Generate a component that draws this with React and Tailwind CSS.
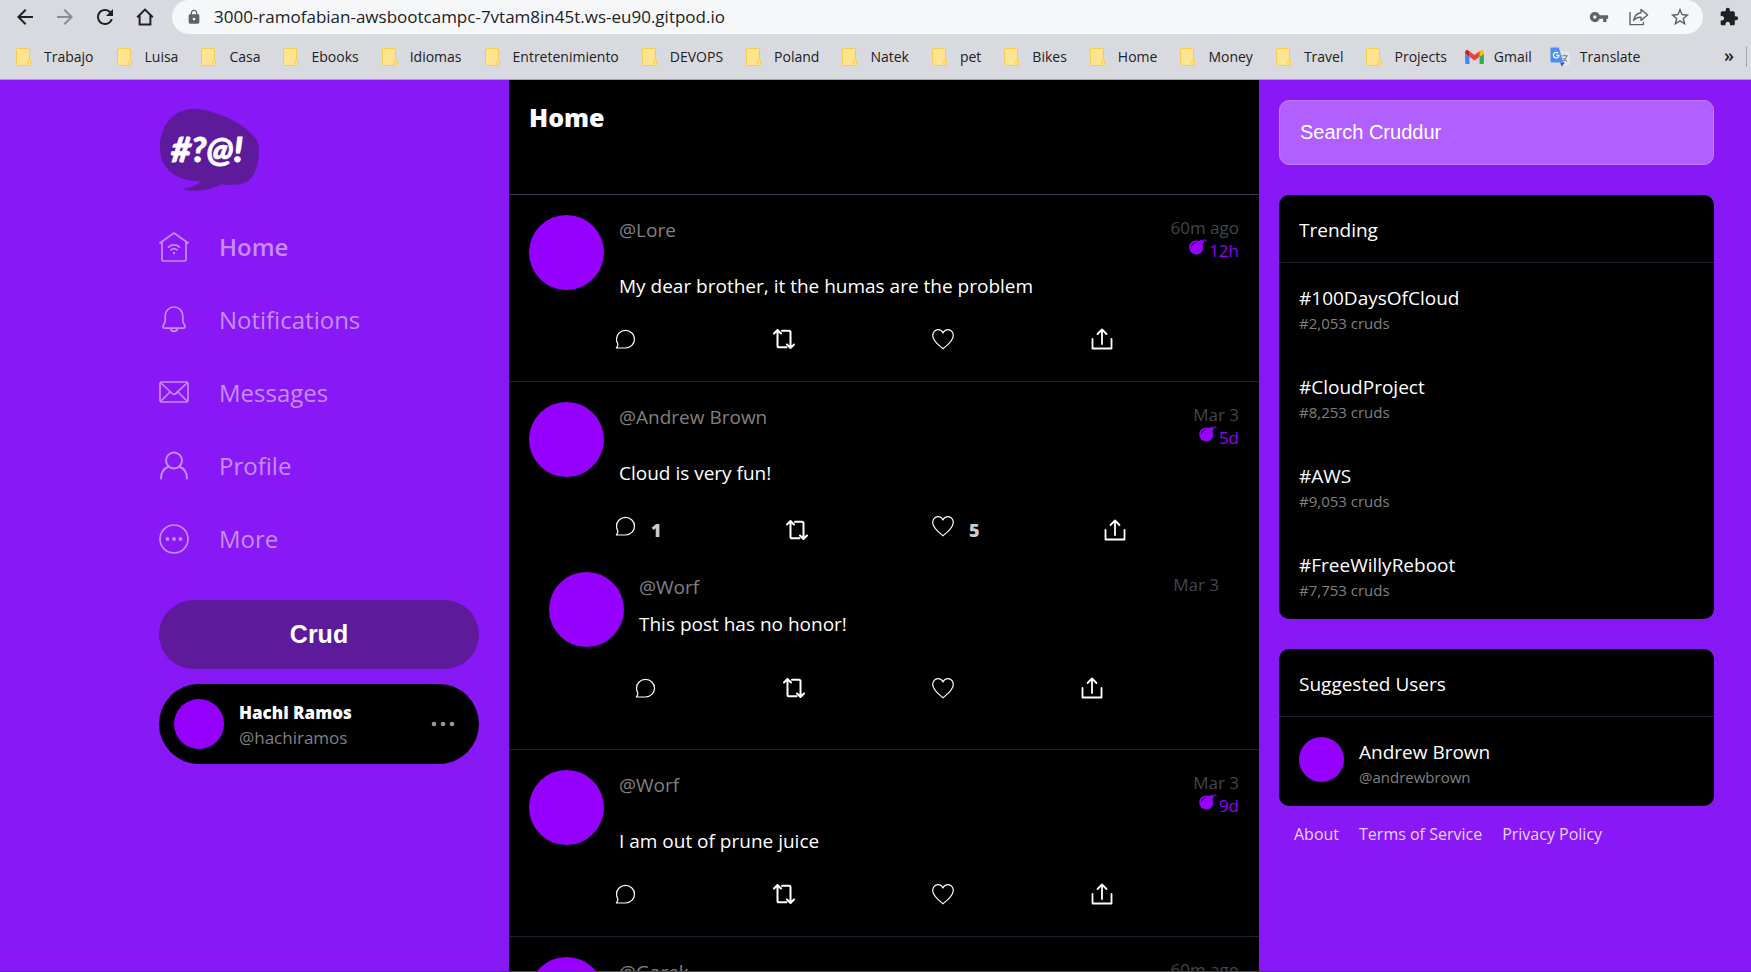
import React from "react";
import {
  MdArrowBack,
  MdArrowForward,
  MdRefresh,
  MdLock,
  MdVpnKey,
  MdStarBorder,
  MdExtension,
} from "react-icons/md";

const folders = [
  "Trabajo", "Luisa", "Casa", "Ebooks", "Idiomas", "Entretenimiento", "DEVOPS", "Poland",
  "Natek", "pet", "Bikes", "Home", "Money", "Travel", "Projects",
];

const posts = [
  { handle: "Lore", time: "60m ago", expires: "12h", message: "My dear brother, it the humas are the problem" },
  {
    handle: "Andrew Brown",
    time: "Mar 3",
    expires: "5d",
    message: "Cloud is very fun!",
    replies: 1,
    likes: 5,
    thread: [{ handle: "Worf", time: "Mar 3", message: "This post has no honor!" }],
  },
  { handle: "Worf", time: "Mar 3", expires: "9d", message: "I am out of prune juice" },
  { handle: "Garek", time: "60m ago" },
];

const trends = [
  ["#100DaysOfCloud", "#2,053 cruds"],
  ["#CloudProject", "#8,253 cruds"],
  ["#AWS", "#9,053 cruds"],
  ["#FreeWillyReboot", "#7,753 cruds"],
];

/* ---------- Browser icons ---------- */

function BrowserHomeIcon() {
  return (
    <svg viewBox="0 0 18 18" className="size-[18px]" fill="none" stroke="currentColor" strokeWidth="2">
      <path d="M1.2 9.2 9 1.6l7.8 7.6M3.6 7.4v9h10.8v-9" />
    </svg>
  );
}

function ShareIcon() {
  return (
    <svg viewBox="0 0 20 20" className="size-5" fill="none" stroke="currentColor" strokeWidth="1.4">
      <path d="M1 5v12.6h13.4v-2.8" />
      <path strokeLinejoin="round" d="M12 2.4 18.6 8 12 13.4v-3.2c-3.300-.2-5.600.800-7.300 3.200.6-4.400 3-7 7.300-7.600z" />
    </svg>
  );
}

function FolderIcon() {
  return (
    <svg viewBox="0 0 15 18" className="h-[18px] w-[15px] shrink-0">
      <path d="M1.300.5h11.400a.8.8 0 0 1 .8.8v15.400a.8.8 0 0 1-.8.800H1.300a.8.8 0 0 1-.8-.8V1.300a.8.8 0 0 1 .8-.8z" fill="#ffe48f" stroke="#f2cf54" />
      <path d="M12 17.500v-5.500h2.500v4.700a.8.8 0 0 1-.8.800z" fill="#ffe48f" stroke="#f2cf54" />
    </svg>
  );
}

function GmailIcon() {
  return (
    <svg viewBox="52 42 88 66" className="h-[14px] w-[19px] shrink-0">
      <path fill="#4285f4" d="M58 108h14V74L52 59v43c0 3.320 2.690 6 6 6" />
      <path fill="#34a853" d="M120 108h14c3.320 0 6-2.690 6-6V59l-20 15" />
      <path fill="#fbbc04" d="M120 48v26l20-15v-8c0-7.420-8.470-11.650-14.400-7.200" />
      <path fill="#ea4335" d="M72 74V48l24 18 24-18v26L96 92" />
      <path fill="#c5221f" d="M52 51v8l20 15V48l-5.600-4.200c-5.940-4.450-14.400-.22-14.400 7.200" />
    </svg>
  );
}

function TranslateIcon() {
  return (
    <svg viewBox="0 0 20 20" className="size-5 shrink-0">
      <path fill="#e4e6ea" d="M7 4.600h11.600c.6 0 1 .4 1 1v11.800c0 .6-.4 1-1 1H12z" />
      <path fill="none" stroke="#80868b" strokeWidth="1.100" d="M11.800 8.800h6.200M14.800 7.600v1.200M16.800 8.800c-.5 2.400-2 4.400-4 5.500M13.400 11c.8 1.500 2 2.700 3.800 3.500" />
      <path fill="#3c4fc0" d="M10 15.500h5l-3.200 4z" />
      <path fill="#4f8df6" d="M1.500.5h7.300L13.500 15.600h-12c-.6 0-1-.4-1-1V1.500c0-.6.4-1 1-1z" />
      <path fill="none" stroke="#fff" strokeWidth="1.300" d="M8.300 6.300A2.800 2.800 0 1 0 9 8.300H6.300" />
    </svg>
  );
}

/* ---------- App icons ---------- */

function Logo() {
  return (
    <svg viewBox="0 0 100 83" className="h-[83px] w-[100px]" role="img" aria-label="Cruddur">
      <path
        fill="#5d1a9a"
        d="M35 0C14 0 1 17 1 38.500 1 60 17 72 42 72.500 37 76.500 31 79 23 80c11 3.500 27 2 39-4.500 7 .7 16 .7 22-1 10-3 16-15 16-36C99 22 63 1 35 0z"
      />
      <text
        x="48"
        y="53"
        textAnchor="middle"
        fill="#fff"
        stroke="#fff"
        strokeWidth="0.8"
        fontFamily="Lato, sans-serif"
        fontWeight="900"
        fontStyle="italic"
        fontSize="35"
      >
        #?@!
      </text>
    </svg>
  );
}

function NavIcon({ children }) {
  return (
    <svg
      viewBox="0 0 30 30"
      className="size-[30px] shrink-0"
      fill="none"
      stroke="currentColor"
      strokeWidth="1.700"
      strokeLinecap="round"
      strokeLinejoin="round"
    >
      {children}
    </svg>
  );
}

const navItems = [
  {
    label: "Home",
    active: true,
    icon: (
      <NavIcon>
        <path d="M1 11 15 1l14 10M3 9.800V27.300c0 1 .7 1.700 1.700 1.700h20.600c1 0 1.700-.7 1.700-1.700V9.800" />
        <path d="M9.500 15.200c3.200-3 7.800-3 11 0M12 17.900c1.800-1.600 4.200-1.600 6 0" />
        <circle cx="15" cy="21" r="1.200" fill="currentColor" stroke="none" />
      </NavIcon>
    ),
  },
  {
    label: "Notifications",
    icon: (
      <NavIcon>
        <path d="M15 2c-5 0-8.800 3.800-8.800 8.800V16c0 1.600-.7 2.700-1.700 3.900-.9 1.200-.8 3.300 1.200 3.300h18.600c2 0 2.100-2.100 1.200-3.300-1-1.200-1.700-2.300-1.700-3.900v-5.200C23.800 5.800 20 2 15 2z" />
        <path d="M11.500 23.700c.6 1.700 1.800 2.700 3.500 2.700s2.900-1 3.500-2.700" />
      </NavIcon>
    ),
  },
  {
    label: "Messages",
    icon: (
      <NavIcon>
        <rect x="1" y="4" width="28" height="20" rx="1.500" />
        <path d="m2 5 11.200 10.500c1 .9 2.600.9 3.600 0L28 5M2 23l9-9M28 23l-9-9" />
      </NavIcon>
    ),
  },
  {
    label: "Profile",
    icon: (
      <NavIcon>
        <circle cx="15" cy="9.500" r="8" strokeWidth="2" />
        <path strokeWidth="2" d="M2 27.500c0-5.500 2.800-10 7.800-12M28 27.500c0-5.500-2.800-10-7.800-12" />
      </NavIcon>
    ),
  },
  {
    label: "More",
    icon: (
      <NavIcon>
        <circle cx="15" cy="15" r="14" />
        <g fill="currentColor" stroke="none">
          <circle cx="8.500" cy="15" r="1.900" />
          <circle cx="15" cy="15" r="1.900" />
          <circle cx="21.500" cy="15" r="1.900" />
        </g>
      </NavIcon>
    ),
  },
];

function ActionIcon({ kind }) {
  return (
    <svg
      viewBox="0 0 22 22"
      className="size-[22px] shrink-0"
      fill="none"
      stroke="currentColor"
      strokeWidth="1.200"
      strokeLinecap="round"
      strokeLinejoin="round"
    >
      {kind === "Reply" && (
        <path d="M2.400 20H11.500a9 8.800 0 1 0-9-8.800c0 1.700.5 3.200 1.300 4.600.3 1.500-.4 3-1.400 4.200z" />
      )}
      {kind === "Repost" && (
        <g strokeWidth="2">
          <path d="M1 5.500 4.500 2 8 5.500M4.500 2.500v15.200c0 1 .6 1.600 1.600 1.600h7.400" />
          <path d="m14 16.500 3.500 3.500 3.500-3.500M17.500 19.500V4.300c0-1-.6-1.600-1.600-1.600H9" />
        </g>
      )}
      {kind === "Like" && (
        <path d="M11 20.800C6.500 17 .7 13 .7 7.500.7 4.300 3 1.700 6 1.700c2.200 0 4 1.100 5 3.300 1-2.200 2.800-3.300 5-3.300 3 0 5.300 2.600 5.300 5.800 0 5.500-5.800 9.500-10.300 13.300z" />
      )}
      {kind === "Share" && (
        <g strokeWidth="1.800">
          <path d="M1.500 11v9.500h19V11" />
          <path d="M11 16V1.500M6.500 6 11 1.500 15.500 6" />
        </g>
      )}
    </svg>
  );
}

function BombIcon() {
  return (
    <svg viewBox="0 0 18 16" className="h-4 w-[18px]" fill="currentColor">
      <path d="M7 1.500c1.200-.1 2.300.1 3.300.6l1.200-1.300 1.600.7c.8-1 2-1.300 3.200-1 .7.200 1.200.8 1.500 1.600l-.8.400c-.5-1-1.500-1.200-2.400-.5l.3 1.400-1.600 1.500c.7 1 1 2.100 1 3.400A7 7 0 0 1 7.200 15.500 7 7 0 0 1 .2 8.500c0-3.800 3-7 6.800-7z" />
      <path d="M2.500 7.500c.4-1.900 1.600-3.200 3.600-3.700" fill="none" stroke="#000" strokeWidth="1" strokeLinecap="round" />
    </svg>
  );
}

/* ---------- Browser ---------- */

function BrowserBar() {
  return (
    <header className="shrink-0 border-b border-[#a3a4a8] bg-[#d9dadf] font-['Open_Sans',sans-serif] text-[#202124]">
      <div className="flex h-[34px] items-center">
        <div className="flex w-[172px] shrink-0 items-center gap-4 pl-[13px]">
          <button aria-label="Back"><MdArrowBack className="size-6" /></button>
          <button aria-label="Forward" className="text-[#8b8c90]"><MdArrowForward className="size-6" /></button>
          <button aria-label="Reload"><MdRefresh className="size-6" /></button>
          <button aria-label="Browser home" className="px-[3px]"><BrowserHomeIcon /></button>
        </div>
        <div className="flex h-full min-w-0 flex-1 items-center rounded-full bg-[#f6f7f9] pl-3.5 pr-3 text-[#5f6368]">
          <MdLock className="size-4 shrink-0" />
          <input
            aria-label="Address"
            defaultValue="3000-ramofabian-awsbootcampc-7vtam8in45t.ws-eu90.gitpod.io"
            className="ml-3 min-w-0 flex-1 bg-transparent text-[17px] text-[#202124] outline-none"
          />
          <div className="flex items-center gap-5">
            <button aria-label="Passwords"><MdVpnKey className="size-5" /></button>
            <button aria-label="Share page"><ShareIcon /></button>
            <button aria-label="Bookmark"><MdStarBorder className="size-[22px]" /></button>
          </div>
        </div>
        <button aria-label="Extensions" className="pr-3 pl-4"><MdExtension className="size-5" /></button>
      </div>
      <nav aria-label="Bookmarks" className="flex h-[45px] items-center pl-4 pr-1 text-sm">
        <div className="flex min-w-0 flex-1 items-center gap-[18px] overflow-hidden">
          <div className="flex items-center gap-[23px]">
            {folders.map((name) => (
              <a key={name} href="#" className="flex items-center gap-[13px]"><FolderIcon />{name}</a>
            ))}
          </div>
          <a href="#" className="flex items-center gap-2.5"><GmailIcon />Gmail</a>
          <a href="#" className="flex items-center gap-2.5"><TranslateIcon />Translate</a>
        </div>
        <button aria-label="More bookmarks" className="pb-1 text-lg font-semibold">»</button>
        <span className="ml-3 h-5 w-px bg-[#a3a4a8]" />
      </nav>
    </header>
  );
}

/* ---------- Left column ---------- */

function Sidebar() {
  return (
    <aside className="flex flex-1 justify-end pr-[30px]">
      <div className="w-[320px] pt-[29px]">
        <Logo />
        <nav className="mt-[18px] flex flex-col text-[#c78cfb]">
          {navItems.map(({ label, icon, active }) => (
            <a key={label} href="#" className="flex h-[73px] items-center gap-[30px] text-2xl">
              {icon}
              <span className={active ? "font-semibold" : "font-normal"}>{label}</span>
            </a>
          ))}
        </nav>
        <button className="mt-[25px] h-[69px] w-full rounded-full bg-[#5d1a9a] font-['Liberation_Sans',Arial,sans-serif] text-[25px] font-bold text-white">
          Crud
        </button>
        <button className="mt-[15px] flex h-20 w-full items-center rounded-full bg-black px-[15px] text-left">
          <span className="size-[50px] rounded-full bg-[#9500ff]" />
          <span className="ml-[15px] flex flex-1 flex-col pt-0.5">
            <strong className="text-[17px] leading-[25px] font-extrabold text-white">Hachi Ramos</strong>
            <span className="text-[17px] leading-[25px] text-[#808080]">@hachiramos</span>
          </span>
          <svg viewBox="0 0 24 6" className="mr-[9px] h-1.5 w-6" fill="#999">
            <circle cx="3" cy="3" r="2.300" />
            <circle cx="12" cy="3" r="2.300" />
            <circle cx="21" cy="3" r="2.300" />
          </svg>
        </button>
      </div>
    </aside>
  );
}

/* ---------- Feed ---------- */

function Action({ kind, count }) {
  return (
    <div className="flex flex-auto">
      <button aria-label={kind} className="flex items-start gap-[15px] text-white">
        <ActionIcon kind={kind} />
        {count ? <span className="text-[18px] leading-[30px] font-extrabold text-[#ccc]">{count}</span> : null}
      </button>
    </div>
  );
}

function Activity({ post }) {
  return (
    <div className="pb-[11px]">
      <div className="flex gap-[15px]">
        <span className="size-[75px] shrink-0 rounded-full bg-[#9500ff]" />
        <div className="-mb-0.5 min-w-0 flex-1 pt-0.5">
          <div className="mb-2.5 flex justify-between">
            <a href="#" className="text-[19px] leading-[27px] text-[#808080]">@{post.handle}</a>
            <div className="-mt-px flex h-[27px] flex-col items-end text-[17px] leading-[23px] has-[span]:h-[47px]">
              <time className="text-[#42454f]">{post.time}</time>
              {post.expires && (
                <span className="flex gap-0.5 text-[#9500ff]"><BombIcon />{post.expires}</span>
              )}
            </div>
          </div>
          {post.message && <p className="text-[19px] leading-[27px] text-white">{post.message}</p>}
        </div>
      </div>
      {post.message && (
        <div className="mt-[30px] -mr-[11px] ml-[85px] flex items-center">
          <Action kind="Reply" count={post.replies} />
          <Action kind="Repost" />
          <Action kind="Like" count={post.likes} />
          <Action kind="Share" />
        </div>
      )}
    </div>
  );
}

function Feed() {
  return (
    <main className="w-[750px] overflow-y-auto bg-black [scrollbar-width:none]">
      <div className="h-[115px] border-b border-[#3c3950] p-5">
        <h1 className="text-[25px] leading-[34px] font-extrabold text-white">Home</h1>
      </div>
      {posts.map((post) => (
        <article key={post.handle} className="border-b border-[#1f2230] p-5">
          <Activity post={post} />
          {post.thread?.map((reply) => (
            <div key={reply.handle} className="px-5 pt-4 pb-[19px]">
              <Activity post={reply} />
            </div>
          ))}
        </article>
      ))}
    </main>
  );
}

/* ---------- Right column ---------- */

function Panel({ title, children }) {
  return (
    <section className="mt-[30px] rounded-[10px] bg-black">
      <h2 className="border-b border-[#1f2230] px-5 pt-[22px] pb-[18px] text-[19px] leading-[27px] text-white">{title}</h2>
      {children}
    </section>
  );
}

function Discover() {
  return (
    <aside className="w-[492px] pt-5 pr-[37px] pl-5">
      <input
        type="search"
        aria-label="Search Cruddur"
        placeholder="Search Cruddur"
        className="h-[65px] w-full rounded-[10px] border border-[#c07cff] bg-[#b15fff] px-5 font-['Liberation_Sans',Arial,sans-serif] text-xl text-white outline-none placeholder:text-white"
      />
      <Panel title="Trending">
        {trends.map(([tag, count]) => (
          <a key={tag} href="#" className="block px-5 pt-[22px] pb-[18px]">
            <span className="block text-[19px] leading-[27px] text-white">{tag}</span>
            <span className="block text-[15px] leading-[22px] text-[#808080]">{count}</span>
          </a>
        ))}
      </Panel>
      <Panel title="Suggested Users">
        <a href="#" className="flex gap-[15px] px-5 pt-5 pb-[18px]">
          <span className="size-[45px] rounded-full bg-[#9500ff]" />
          <span className="pt-0.5">
            <span className="block text-[19px] leading-[27px] text-white">Andrew Brown</span>
            <span className="block text-[15px] leading-[22px] text-[#808080]">@andrewbrown</span>
          </span>
        </a>
      </Panel>
      <footer className="mt-4 flex gap-5 pl-[15px] text-base text-[#e9d2fe]">
        <a href="#">About</a>
        <a href="#">Terms of Service</a>
        <a href="#">Privacy Policy</a>
      </footer>
    </aside>
  );
}

export default function App() {
  return (
    <div className="flex h-screen flex-col overflow-hidden">
      <BrowserBar />
      <div className="flex min-h-0 flex-1 border-b border-[#4a4a4a] bg-[#8818f5] font-['Open_Sans','Noto_Sans',sans-serif]">
        <Sidebar />
        <Feed />
        <Discover />
      </div>
    </div>
  );
}
